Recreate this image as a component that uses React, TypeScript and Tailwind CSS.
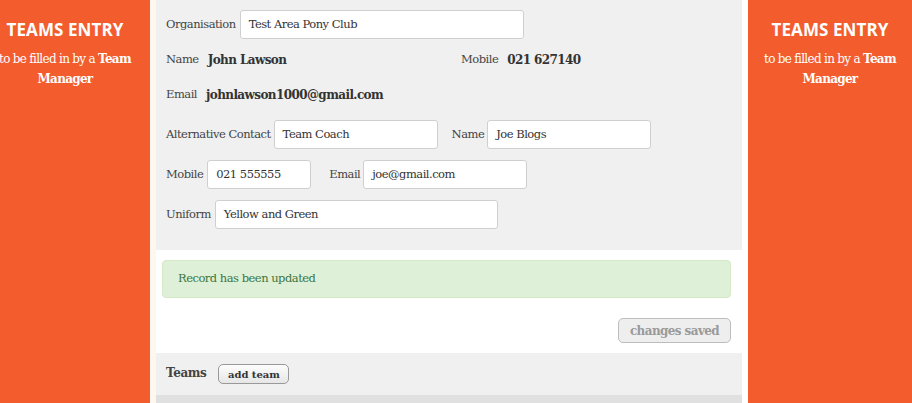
import React from 'react';

const serif = { fontFamily: '"DejaVu Serif", Georgia, serif' };

const SidePanel: React.FC<{ shift?: boolean }> = ({ shift }) => (
  <div className="h-full bg-[#f35c2c] overflow-hidden">
    <div className={`${shift ? 'w-[164px] -ml-[17px]' : 'w-full'} pt-[19px] text-center text-white`}>
      <h2 className="text-[17px] font-bold leading-[22px] tracking-[0.1px]" style={{ fontFamily: '"Open Sans", sans-serif' }}>
        TEAMS ENTRY
      </h2>
      <p className="mt-[8px] text-[12px] leading-[20px] tracking-[-0.7px]" style={serif}>
        <span className="block">
          to be filled in by a <b>Team</b>
        </span>
        <b className="block">Manager</b>
      </p>
    </div>
  </div>
);

const Input: React.FC<{ value: string; w: string }> = ({ value, w }) => (
  <div className={`${w} h-[29px] bg-white border border-[#cfcfcf] rounded-[3px] px-[8px] flex items-center text-[11.5px] text-[#333] tracking-[-0.5px]`}>
    {value}
  </div>
);

const Label: React.FC<{ children: React.ReactNode; className?: string }> = ({ children, className = '' }) => (
  <span className={`text-[11.5px] text-[#444] tracking-[-0.5px] ${className}`}>{children}</span>
);

const Value: React.FC<{ children: React.ReactNode }> = ({ children }) => (
  <b className="text-[12px] text-[#333] tracking-[-0.6px]">{children}</b>
);

export default function App() {
  return (
    <div className="w-[912px] h-[403px] flex overflow-hidden bg-white" style={serif}>
      <div className="w-[150px] shrink-0">
        <SidePanel shift />
      </div>
      <div className="w-[6px] shrink-0 bg-[#fdf7f2]" />
      <div className="w-[586px] shrink-0 flex flex-col">
        <div className="bg-[#f0f0f0] h-[250px] pl-[10px] pt-[10px] flex flex-col">
          <div className="flex items-center gap-[4px]">
            <Label>Organisation</Label>
            <Input value="Test Area Pony Club" w="w-[284px]" />
          </div>
          <div className="flex items-center h-[20px] mt-[11px]">
            <div className="w-[295px] flex items-center gap-[9px]">
              <Label>Name</Label>
              <Value>John Lawson</Value>
            </div>
            <div className="flex items-center gap-[9px]">
              <Label>Mobile</Label>
              <Value>021 627140</Value>
            </div>
          </div>
          <div className="flex items-center gap-[9px] h-[20px] mt-[15px]">
            <Label>Email</Label>
            <Value>johnlawson1000@gmail.com</Value>
          </div>
          <div className="flex items-center mt-[15px]">
            <Label>Alternative Contact</Label>
            <Input value="Team Coach" w="w-[164px] ml-[3px]" />
            <Label className="ml-[14px]">Name</Label>
            <Input value="Joe Blogs" w="w-[164px] ml-[3px]" />
          </div>
          <div className="flex items-center mt-[11px]">
            <Label>Mobile</Label>
            <Input value="021 555555" w="w-[104px] ml-[4px]" />
            <Label className="ml-[18px]">Email</Label>
            <Input value="joe@gmail.com" w="w-[164px] ml-[3px]" />
          </div>
          <div className="flex items-center mt-[11px]">
            <Label>Uniform</Label>
            <Input value="Yellow and Green" w="w-[283px] ml-[4px]" />
          </div>
        </div>
        <div className="h-[103px] flex flex-col pl-[6px] pr-[11px] pt-[10px]">
          <div className="h-[38px] bg-[#dff0d8] border border-[#d6e9c6] rounded-[4px] flex items-center pl-[15px] text-[11.5px] text-[#3c763d] tracking-[-0.5px]">
            Record has been updated
          </div>
          <div className="flex justify-end mt-[20px]">
            <button className="h-[25px] w-[113px] bg-[#eeeeee] border border-[#bdbdbd] rounded-[5px] text-[12px] font-bold text-[#9a9a9a] tracking-[-0.6px]">
              changes saved
            </button>
          </div>
        </div>
        <div className="h-[42px] bg-[#f0f0f0] flex items-center pl-[10px] gap-[12px]">
          <b className="text-[12px] text-[#444] tracking-[-0.4px] -mt-[2px]">Teams</b>
          <button className="h-[20px] w-[71px] bg-gradient-to-b from-[#fdfdfd] to-[#e6e6e6] border border-[#999] rounded-[5px] text-[10px] font-bold text-[#333] flex items-center justify-center">
            add team
          </button>
        </div>
        <div className="flex-1 bg-[#e0e0e0]" />
      </div>
      <div className="w-[6px] shrink-0 bg-white" />
      <div className="flex-1">
        <SidePanel />
      </div>
    </div>
  );
}
